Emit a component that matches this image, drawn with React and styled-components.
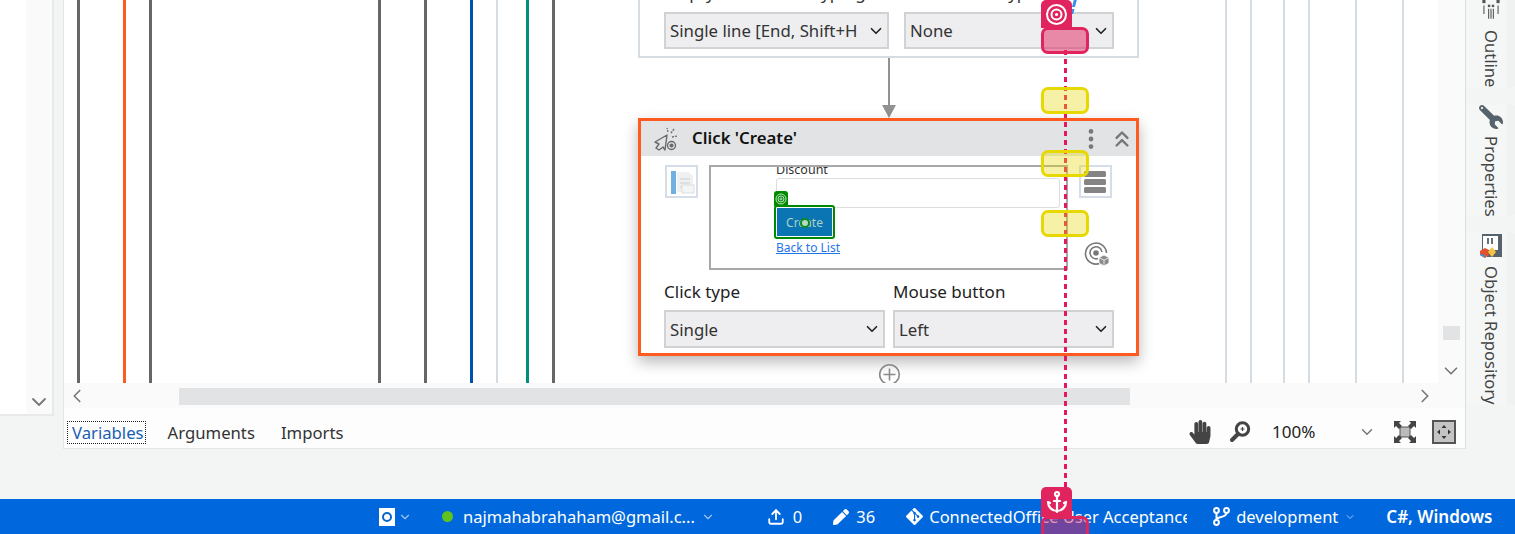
import React from 'react'
import styled, { createGlobalStyle } from 'styled-components'
import { ChevronDown, ChevronLeft, ChevronRight, ChevronsUp, EllipsisVertical, Anchor, Upload } from 'lucide-react'
import { FaWrench, FaHandPaper, FaPen } from 'react-icons/fa'
import { SiGit } from 'react-icons/si'

const font = `"Noto Sans", "Open Sans", sans-serif`

const GlobalStyle = createGlobalStyle`
  html, body { margin: 0; padding: 0; background: #f3f5f5; overflow: hidden; }
  * { box-sizing: border-box; }
`

const Page = styled.div`
  position: relative;
  width: 1515px;
  height: 534px;
  overflow: hidden;
  font-family: ${font};
  color: #222;
  display: flex;
  flex-direction: column;
`
const Main = styled.div`
  height: 499px;
  display: flex;
  align-items: flex-start;
`
const LeftPanel = styled.div`
  width: 54px;
  height: 416px;
  margin-right: 9px;
  display: flex;
  justify-content: flex-end;
  background: #fff;
  border-right: 2px solid #e8eaea;
  border-bottom: 2px solid #e8eaea;
`
const LeftScroll = styled.div`
  width: 26px;
  display: flex;
  align-items: flex-end;
  justify-content: center;
  background: #fafafa;
  color: #777;
`
const Designer = styled.div`
  width: 1403px;
  height: 449px;
  display: flex;
  flex-direction: column;
  background: #fdfdfd;
  border-left: 1px solid #e4e6e6;
  border-right: 1px solid #dcdfdf;
  border-bottom: 1px solid #e4e6e6;
`
const CanvasRow = styled.div`
  height: 383px;
  display: flex;
`
const Canvas = styled.div`
  position: relative;
  width: 1374px;
  overflow: hidden;
  background: #fff;
  padding-left: 574px;
  display: flex;
  flex-direction: column;
`
const Line = styled.div`
  position: absolute;
  top: 0;
  bottom: 0;
  left: ${p => p.$x - 65}px;
  width: ${p => p.$w || 3}px;
  background: ${p => p.$color};
`
const VScroll = styled.div`
  flex: 1;
  background: #fafafa;
  display: flex;
  flex-direction: column;
  align-items: center;
  padding: 326px 1px 0 0;
  color: #777;
`
const VThumb = styled.div`
  width: 17px;
  height: 14px;
  margin-bottom: 20px;
  background: #e1e3e5;
`
const HScroll = styled.div`
  height: 25px;
  display: flex;
  align-items: center;
  padding: 0 29px 0 2px;
  background: #fafafa;
  color: #777;
  margin-bottom: 7px;
`
const HTrack = styled.div`
  flex: 1;
  height: 17px;
  margin-top: 2px;
  padding: 0 284px 0 91px;
`
const HThumb = styled.div`
  height: 100%;
  background: #e1e3e5;
`
const TabRow = styled.div`
  flex: 1;
  display: flex;
  align-items: center;
  padding-left: 3px;
  background: #fdfdfd;
`
const Tab = styled.div`
  height: 23px;
  margin-top: 2px;
  font-size: 16.7px;
  line-height: 21px;
  padding: 0 1px 0 4px;
  margin-right: ${p => p.$gap}px;
  color: ${p => (p.$active ? '#1a5fb4' : '#333')};
  border: 1px dotted ${p => (p.$active ? '#222' : 'transparent')};
`
const ZoomTools = styled.div`
  margin-left: auto;
  display: flex;
  align-items: center;
  color: #444;
  padding-right: 9px;
`
const ZoomValue = styled.div`
  width: 86px;
  margin-left: 21px;
  font-size: 17px;
  color: #222;
`
const ToolSlot = styled.div`
  display: flex;
  margin-left: ${p => p.$gap || 0}px;
`
const RightStrip = styled.div`
  flex: 1;
  display: flex;
  flex-direction: column;
  align-items: flex-end;
  height: 405px;
`
const SideTab = styled.div`
  width: 49px;
  height: ${p => p.$h}px;
  margin-bottom: 18px;
  display: flex;
  flex-direction: column;
  align-items: center;
  background: linear-gradient(90deg, #f5f7f7 0 41px, #f0f2f2 41px);
`
const SideLabel = styled.div`
  writing-mode: vertical-rl;
  font-size: 16.6px;
  line-height: 20px;
  color: #444;
  margin-top: ${p => p.$mt}px;
  white-space: nowrap;
`
const Wrench = styled(FaWrench)`
  flex: none;
  color: #56636c;
  transform: scaleY(-1);
`

const Card = styled.div`
  flex: none;
  width: 501px;
  background: #fff;
  border: 2px solid #d5dde3;
`
const TopCard = styled(Card)`
  height: 58px;
  border-top: 0;
  padding: 12px 23px 0 24px;
  display: flex;
  gap: 15px;
  overflow: hidden;
`
const Arrow = styled.svg`
  display: block;
  flex: none;
  margin-left: 240px;
`
const ClickCard = styled(Card)`
  height: 238px;
  border: 3px solid #ff5a1f;
  box-shadow: 0 6px 14px rgba(0, 0, 0, 0.28);
`
const CardHeader = styled.div`
  height: 35px;
  display: flex;
  align-items: center;
  padding: 0 1px 0 12px;
  background: #e1e3e5;
  color: #777;
`
const CardTitle = styled.div`
  margin: -2px 0 0 13px;
  font-size: 16.8px;
  font-weight: 600;
  color: #111;
  flex: 1;
`
const HeaderSlot = styled.div`
  display: flex;
  margin-right: ${p => p.$gap || 0}px;
`
const PreviewRow = styled.div`
  height: 105px;
  margin-top: 9px;
  padding-left: 24px;
  display: flex;
`
const IconBox = styled.div`
  width: 33px;
  height: 33px;
  border: 2px solid #d5dde8;
  background: #fff;
  display: flex;
  align-items: center;
  justify-content: center;
`
const Shot = styled.div`
  width: 359px;
  height: 105px;
  margin: 0 11px;
  border: 2px solid #a8a8a8;
  padding-left: 65px;
  overflow: hidden;
`
const ShotLabel = styled.div`
  height: 9px;
  font-size: 12.5px;
  line-height: 12px;
  margin-top: -3px;
  color: #333;
`
const ShotInput = styled.div`
  width: 284px;
  height: 30px;
  margin-top: 5px;
  border: 1px solid #ddd;
  border-radius: 3px;
`
const Found = styled.div`
  position: relative;
  width: 61px;
  height: 34px;
  margin: -3px 0 0 -2px;
  border: 2px solid #008a00;
  border-radius: 3px;
  padding: 1px;
  background: #fff;
`
const FoundFace = styled.div`
  height: 100%;
  display: flex;
  align-items: center;
  justify-content: center;
  background: #0b74b2;
  color: #a9d3c9;
  font-size: 12px;
`
const FoundTab = styled.div`
  position: absolute;
  left: -2px;
  top: -16px;
  width: 14px;
  height: 15px;
  display: flex;
  align-items: center;
  justify-content: center;
  background: #008a00;
  border-radius: 3px 3px 0 0;
`
const FoundDot = styled.div`
  position: absolute;
  left: 24px;
  top: 11px;
  width: 10px;
  height: 10px;
  border-radius: 50%;
  border: 2.5px solid #0d8a1c;
  background: #b7d9c7;
`
const BackLink = styled.a`
  display: block;
  margin-top: 1px;
  font-size: 12px;
  line-height: 16px;
  color: #1f74e8;
  text-decoration: underline;
`
const SideColumn = styled.div`
  width: 33px;
  display: flex;
  flex-direction: column;
`
const TargetSlot = styled.div`
  display: flex;
  margin: 43px 0 0 5px;
`
const Fields = styled.div`
  display: flex;
  gap: 8px;
  margin-top: 10px;
  padding-left: 23px;
`
const Field = styled.div`
  width: 221px;
`
const FieldLabel = styled.div`
  height: 30px;
  font-size: 17px;
  line-height: 24px;
  color: #222;
`
const SelectBox = styled.div`
  width: ${p => p.$w}px;
  height: ${p => p.$h || 38}px;
  display: flex;
  align-items: center;
  justify-content: space-between;
  padding: 0 3px 0 5px;
  background: #eeeef0;
  border: 1px solid #d0d2d4;
  outline: 1px solid #d0d2d4;
  outline-offset: -2px;
  font-size: 16.8px;
  color: #333;
  white-space: nowrap;
  overflow: hidden;
`
const ClippedLabel = styled.div`
  position: absolute;
  top: -19px;
  left: ${p => p.$x}px;
  font-size: 17px;
  line-height: 24px;
  color: #333;
  white-space: nowrap;
`
const TopCardBody = styled.div`
  position: relative;
`
const AddSlot = styled.div`
  flex: none;
  display: flex;
  margin: 7px 0 0 240px;
`

const StatusBar = styled.div`
  height: 35px;
  display: flex;
  align-items: center;
  background: #0067dc;
  color: #fff;
  font-size: 16.5px;
  padding-left: 379px;
  white-space: nowrap;
`
const StatusItem = styled.div`
  display: flex;
  align-items: center;
  flex: none;
  width: ${p => (p.$w ? `${p.$w}px` : 'auto')};
  margin-right: ${p => p.$gap || 0}px;
  overflow: hidden;
  font-size: ${p => (p.$bold ? '17px' : 'inherit')};
  font-weight: ${p => (p.$bold ? 600 : 400)};
`
const StatusText = styled.span`
  margin-left: ${p => p.$ml || 0}px;
`
const Caret = styled(ChevronDown)`
  flex: none;
  color: #9fc4f2;
  margin-left: ${p => p.$ml || 0}px;
`
const GitMark = styled(SiGit)`
  flex: none;
`
const Dot = styled.div`
  width: 11px;
  height: 11px;
  border-radius: 50%;
  background: #5fc31c;
  margin-right: 10px;
`
const OutlookBox = styled.div`
  width: 16px;
  height: 18px;
  background: #fff;
  display: flex;
  align-items: center;
  justify-content: center;
`
const OutlookRing = styled.div`
  width: 10px;
  height: 10px;
  border-radius: 50%;
  border: 2.5px solid #0a66c8;
`

const DashLine = styled.div`
  position: absolute;
  left: 1064px;
  top: 50px;
  height: 440px;
  width: 3px;
  background: repeating-linear-gradient(180deg, #e8175d 0 5px, transparent 5px 9px);
`
const Pin = styled.div`
  position: absolute;
  left: 1041px;
  top: ${p => p.$top}px;
  width: 31px;
  height: ${p => p.$h}px;
  display: flex;
  align-items: center;
  justify-content: center;
  background: #e0245e;
  border-radius: 5px 5px 0 0;
  color: #fff;
`
const Handle = styled.div`
  position: absolute;
  left: 1041px;
  top: ${p => p.$top}px;
  width: 48px;
  height: 27px;
  border-radius: 7px;
  border: 3.5px solid ${p => (p.$pink ? '#e0245e' : '#e6d800')};
  background: ${p => (p.$pink ? 'rgba(224, 36, 94, 0.5)' : 'rgba(230, 216, 0, 0.35)')};
`
const BlueTick = styled.div`
  position: absolute;
  left: 1072px;
  top: 0;
  width: 3px;
  height: 14px;
  background: repeating-linear-gradient(180deg, #3a8fe8 0 7px, transparent 7px 9px);
  transform: skewX(-14deg);
`

const lines = [
  [78, '#666'], [124, '#ff5a1f'], [150, '#666'], [379, '#666'], [425, '#666'],
  [471, '#0050b0'], [497, '#d5dde3', 2], [527, '#00907a'], [553, '#666'],
  [1226, '#d5dde3', 2], [1251, '#d5dde3', 2], [1284, '#d5dde3', 2],
  [1309, '#d5dde3', 2], [1356, '#d5dde3', 2], [1403, '#d5dde3', 2]
]

const ClickIcon = () => (
  <svg width="26" height="26" viewBox="0 0 26 26" fill="none" stroke="#6a6a6a" strokeWidth="1.4">
    <path d="M14 9L2 16l4 2-3 4 3 2 4-3 2 3z" strokeLinejoin="round" />
    <path d="M15 6l-1-4M18 7l3-4M19 11l5-1" strokeWidth="1.3" strokeDasharray="2 1" />
    <circle cx="18.5" cy="19.5" r="4" />
    <circle cx="18.5" cy="19.5" r="1.4" fill="#6a6a6a" />
  </svg>
)
const PageIcon = () => (
  <svg width="27" height="27" viewBox="0 0 27 27">
    <rect x="3" y="3" width="5" height="23" fill="#6fb0e0" />
    <path d="M9 4h11l5 4v16H9z" fill="#eef0f2" />
    <path d="M12 11h10M12 15h10M12 19h10" stroke="#d8dadd" strokeWidth="1.5" />
    <rect x="14" y="17" width="12" height="8" fill="#f4f5f6" stroke="#dcdee0" />
  </svg>
)
const MenuIcon = () => (
  <svg width="25" height="25" viewBox="0 0 25 25" fill="#848484">
    <rect x="1" y="2" width="22" height="6" rx="1.5" />
    <rect x="1" y="10" width="22" height="6" rx="1.5" />
    <rect x="1" y="18" width="22" height="6" rx="1.5" />
  </svg>
)
const TargetCube = () => (
  <svg width="26" height="26" viewBox="0 0 26 26" fill="none" stroke="#777" strokeWidth="1.6">
    <path d="M16 22.3A10.5 10.5 0 1 1 22.5 12" />
    <path d="M14 17.5A6 6 0 1 1 18 11" />
    <circle cx="12" cy="12" r="2" fill="#777" />
    <path d="M20 14l5 2.6v5.6L20 25l-5-2.8v-5.6z" fill="#8a8a8a" stroke="#fff" strokeWidth="0.8" />
    <path d="M15 16.6l5 2.6 5-2.6M20 19.2V25" stroke="#fff" strokeWidth="0.8" />
  </svg>
)
const SmallTarget = () => (
  <svg width="12" height="12" viewBox="0 0 12 12" fill="none" stroke="#bfe3bf" strokeWidth="1">
    <circle cx="6" cy="6" r="5" />
    <circle cx="6" cy="6" r="3" />
    <circle cx="6" cy="6" r="1" />
  </svg>
)
const BigTarget = () => (
  <svg width="23" height="23" viewBox="0 0 23 23" fill="none" stroke="#fff" strokeWidth="2">
    <circle cx="11.5" cy="11.5" r="9.5" />
    <circle cx="11.5" cy="11.5" r="5" />
    <circle cx="11.5" cy="11.5" r="1.6" fill="#fff" stroke="none" />
  </svg>
)
const OutlineIcon = () => (
  <svg width="24" height="25" viewBox="0 0 24 25" stroke="#555" strokeWidth="1.4" fill="#555">
    <rect x="1" y="0" width="4" height="4" stroke="none" />
    <rect x="19" y="0" width="4" height="4" stroke="none" />
    <rect x="8" y="6" width="3" height="3" stroke="none" />
    <rect x="13" y="6" width="3" height="3" stroke="none" />
    <path d="M3 7v11M9 11v13M12 11v13M15 11v13M21 7v11" fill="none" />
  </svg>
)
const RepoIcon = () => (
  <svg width="24" height="26" viewBox="0 0 24 26">
    <path d="M3 1h20v23H8V18H3z" fill="#56636c" />
    <rect x="4" y="3" width="15" height="14" fill="#fff" />
    <path d="M9 5v6M13 5v6" stroke="#56636c" strokeWidth="1.8" />
    <path d="M1 18l5-3 4 2v5l-4 3-5-3z" fill="#e2512d" />
    <path d="M1 21l5 1v3l-5-3z" fill="#3e8ed8" />
    <path d="M13 14l4 5-4 5-4-5z" fill="#f6c343" />
  </svg>
)
const Magnifier = () => (
  <svg width="22" height="22" viewBox="0 0 22 22" fill="none">
    <circle cx="13.5" cy="8" r="6.2" stroke="#444" strokeWidth="3" />
    <path d="M9 13l-6 6" stroke="#444" strokeWidth="4" strokeLinecap="round" />
    <path d="M11.5 8h4M13.5 6v4" stroke="#444" strokeWidth="1.2" />
  </svg>
)
const FitIcon = () => (
  <svg width="24" height="24" viewBox="0 0 24 24">
    <rect x="7" y="7" width="10" height="10" fill="#bbb" stroke="#555" />
    <path d="M1 1h7L6 3l3 3-3 3-3-3-2 2zM23 1h-7l2 2-3 3 3 3 3-3 2 2zM1 23h7l-2-2 3-3-3-3-3 3-2-2zM23 23h-7l2-2-3-3 3-3 3 3 2-2z" fill="#444" />
  </svg>
)
const ActualIcon = () => (
  <svg width="24" height="24" viewBox="0 0 24 24">
    <rect x="1" y="1" width="22" height="22" fill="#c4c4c4" stroke="#555" strokeWidth="2" />
    <path d="M12 5l2.5 3h-5zM12 19l2.5-3h-5zM5 12l3-2.5v5zM19 12l-3-2.5v5z" fill="#333" />
  </svg>
)
const BranchIcon = () => (
  <svg width="17" height="19" viewBox="0 0 17 19" fill="none" stroke="#fff" strokeWidth="2">
    <circle cx="3.5" cy="3.5" r="2.4" />
    <circle cx="13.5" cy="3.5" r="2.4" />
    <circle cx="3.5" cy="15.5" r="2.4" />
    <path d="M3.5 6v7M13.5 6c0 5-10 3-10 7" />
  </svg>
)
const PlusCircle = () => (
  <svg width="23" height="23" viewBox="0 0 23 23" fill="none" stroke="#8a8a8a" strokeWidth="1.6">
    <circle cx="11.5" cy="11.5" r="9.8" />
    <path d="M11.5 5.5v12M5.5 11.5h12" />
  </svg>
)

const Select = ({ w, h, value }) => (
  <SelectBox $w={w} $h={h}>
    {value}
    <ChevronDown size={18} strokeWidth={2.2} color="#222" />
  </SelectBox>
)

export default function App() {
  return (
    <Page>
      <GlobalStyle />
      <Main>
        <LeftPanel>
          <LeftScroll><ChevronDown size={24} strokeWidth={1.8} /></LeftScroll>
        </LeftPanel>
        <Designer>
          <CanvasRow>
            <Canvas>
              {lines.map(([x, color, w]) => <Line key={x} $x={x} $color={color} $w={w} />)}
              <TopCardBody>
                <ClippedLabel $x={26}>Empty field before typing</ClippedLabel>
                <ClippedLabel $x={266}>Click before typing</ClippedLabel>
                <TopCard>
                  <Select w={225} h={37} value="Single line [End, Shift+H" />
                  <Select w={210} h={37} value="None" />
                </TopCard>
              </TopCardBody>
              <Arrow width="22" height="60" viewBox="0 0 22 60">
                <path d="M11 0v48" stroke="#929292" strokeWidth="2" />
                <path d="M4 47h14l-7 13z" fill="#929292" />
              </Arrow>
              <ClickCard>
                <CardHeader>
                  <ClickIcon />
                  <CardTitle>Click 'Create'</CardTitle>
                  <HeaderSlot $gap={5}><EllipsisVertical size={26} strokeWidth={2.4} /></HeaderSlot>
                  <HeaderSlot><ChevronsUp size={26} strokeWidth={2.2} /></HeaderSlot>
                </CardHeader>
                <PreviewRow>
                  <IconBox><PageIcon /></IconBox>
                  <Shot>
                    <ShotLabel>Discount</ShotLabel>
                    <ShotInput />
                    <Found>
                      <FoundTab><SmallTarget /></FoundTab>
                      <FoundFace>Create</FoundFace>
                      <FoundDot />
                    </Found>
                    <BackLink>Back to List</BackLink>
                  </Shot>
                  <SideColumn>
                    <IconBox><MenuIcon /></IconBox>
                    <TargetSlot><TargetCube /></TargetSlot>
                  </SideColumn>
                </PreviewRow>
                <Fields>
                  <Field>
                    <FieldLabel>Click type</FieldLabel>
                    <Select w={221} value="Single" />
                  </Field>
                  <Field>
                    <FieldLabel>Mouse button</FieldLabel>
                    <Select w={221} value="Left" />
                  </Field>
                </Fields>
              </ClickCard>
              <AddSlot><PlusCircle /></AddSlot>
            </Canvas>
            <VScroll>
              <VThumb />
              <ChevronDown size={22} strokeWidth={1.8} />
            </VScroll>
          </CanvasRow>
          <HScroll>
            <ChevronLeft size={22} strokeWidth={1.8} />
            <HTrack><HThumb /></HTrack>
            <ChevronRight size={22} strokeWidth={1.8} />
          </HScroll>
          <TabRow>
            <Tab $active $gap={17}>Variables</Tab>
            <Tab $gap={19}>Arguments</Tab>
            <Tab>Imports</Tab>
            <ZoomTools>
              <FaHandPaper size={24} />
              <ToolSlot $gap={17}><Magnifier /></ToolSlot>
              <ZoomValue>100%</ZoomValue>
              <ChevronDown size={18} color="#777" />
              <ToolSlot $gap={17}><FitIcon /></ToolSlot>
              <ToolSlot $gap={15}><ActualIcon /></ToolSlot>
            </ZoomTools>
          </TabRow>
        </Designer>
        <RightStrip>
          <SideTab $h={87}>
            <OutlineIcon />
            <SideLabel $mt={10}>Outline</SideLabel>
          </SideTab>
          <SideTab $h={110}>
            <Wrench size={24} />
            <SideLabel $mt={7}>Properties</SideLabel>
          </SideTab>
          <SideTab $h={172}>
            <RepoIcon />
            <SideLabel $mt={7}>Object Repository</SideLabel>
          </SideTab>
        </RightStrip>
      </Main>
      <StatusBar>
        <StatusItem $gap={30}>
          <OutlookBox><OutlookRing /></OutlookBox>
          <Caret size={14} $ml={3} />
        </StatusItem>
        <StatusItem $gap={52}>
          <Dot />
          najmahabrahaham@gmail.c...
          <Caret size={14} $ml={6} />
        </StatusItem>
        <StatusItem $gap={31}>
          <Upload size={18} strokeWidth={2.4} />
          <StatusText $ml={8}>0</StatusText>
        </StatusItem>
        <StatusItem $gap={31}>
          <FaPen size={16} />
          <StatusText $ml={7}>36</StatusText>
        </StatusItem>
        <StatusItem $w={281} $gap={26}>
          <GitMark size={17} />
          <StatusText $ml={6}>ConnectedOffice User Acceptance</StatusText>
        </StatusItem>
        <StatusItem $gap={30}>
          <BranchIcon />
          <StatusText $ml={6}>development</StatusText>
          <Caret size={12} $ml={6} />
        </StatusItem>
        <StatusItem $bold>C#, Windows</StatusItem>
      </StatusBar>

      <BlueTick />
      <DashLine />
      <Handle $pink $top={27} />
      <Pin $top={0} $h={28}><BigTarget /></Pin>
      <Handle $top={87} />
      <Handle $top={150} />
      <Handle $top={210} />
      <Pin $top={487} $h={30}><Anchor size={24} strokeWidth={2.2} /></Pin>
      <Handle $pink $top={516} />
    </Page>
  )
}
